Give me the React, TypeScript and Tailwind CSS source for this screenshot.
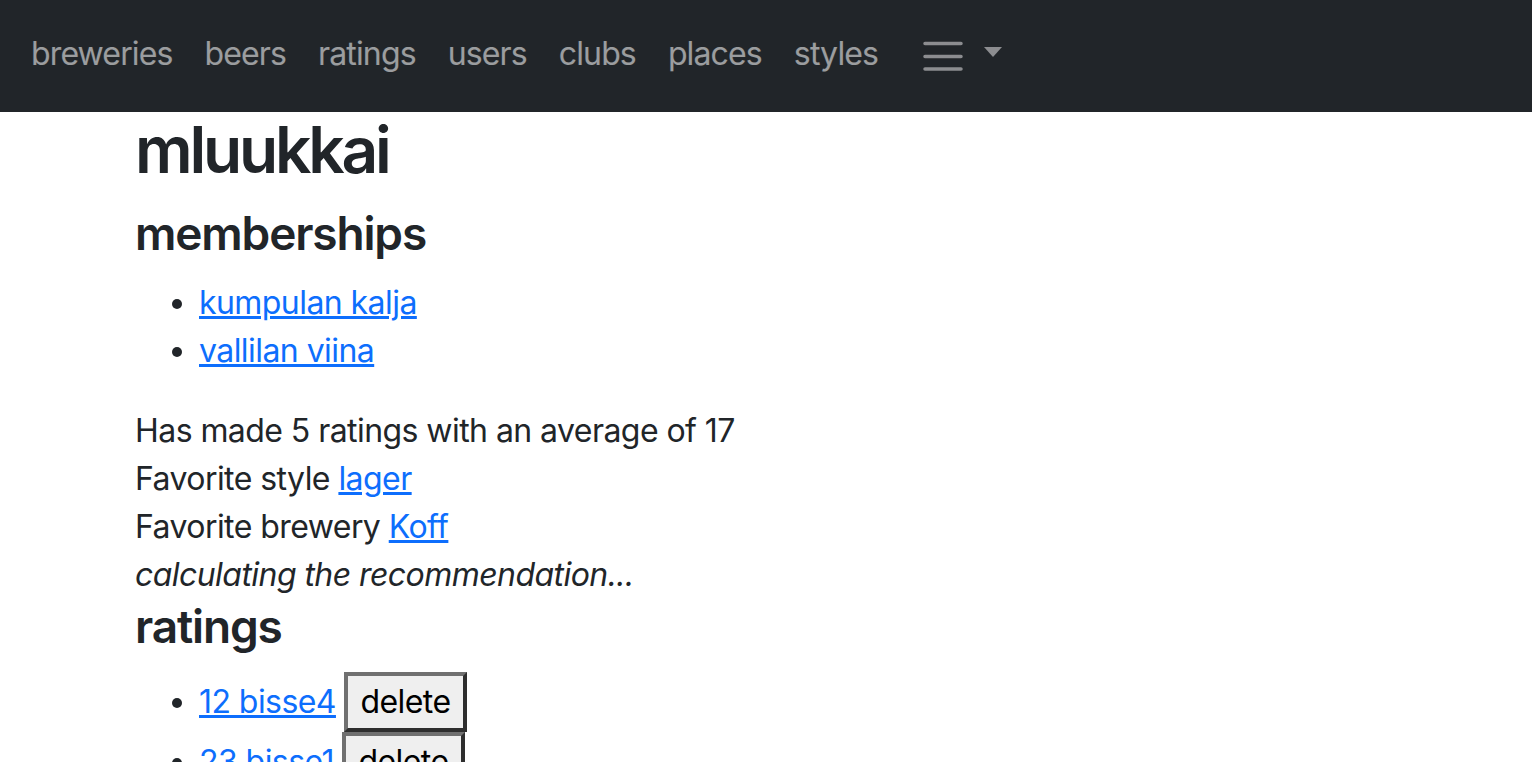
const NAV_LINKS = ["breweries", "beers", "ratings", "users", "clubs", "places", "styles"];

const MEMBERSHIPS = ["kumpulan kalja", "vallilan viina"];

const RATINGS = ["12 bisse4", "23 bisse1"];

export default function App() {
  return (
    <div className="min-h-screen bg-white text-[#212529] font-['Inter',sans-serif]">
      {/* Navbar */}
      <nav className="h-[112px] bg-[#212529] flex items-start pt-[30px] pl-[15px]">
        {NAV_LINKS.map((link) => (
          <a key={link} href="#" className="px-4 text-[32px] leading-[48px] tracking-[-0.027em] text-white/55">
            {link}
          </a>
        ))}
        <div className="ml-[29px] mt-[11px] flex items-start">
          <svg width="40" height="30" viewBox="0 0 40 30" fill="none">
            <path d="M2 2.5H38M2 15.5H38M2 28H38" stroke="#8c8d90" strokeWidth="3.5" strokeLinecap="round" />
          </svg>
          <span className="ml-[21px] mt-[6px] w-0 h-0 border-t-[10px] border-t-[#8c8d90] border-x-[9px] border-x-transparent" />
        </div>
      </nav>

      {/* User page */}
      <main className="pl-[135px] tracking-[-0.035em]">
        <h1 className="text-[64px] leading-[76px] font-semibold tracking-[-0.05em]">mluukkai</h1>

        <h2 className="mt-[18px] text-[46px] leading-[55px] font-semibold tracking-[-0.025em]">memberships</h2>
        <ul className="mt-[18px] list-disc pl-[64px] text-[32px] leading-[48px]">
          {MEMBERSHIPS.map((club) => (
            <li key={club}>
              <a href="#" className="text-[#0d6efd] underline">{club}</a>
            </li>
          ))}
        </ul>

        <div className="mt-[32px] text-[32px] leading-[48px]">
          <p>Has made 5 ratings with an average of 17</p>
          <p>
            Favorite style <a href="#" className="text-[#0d6efd] underline">lager</a>
          </p>
          <p>
            Favorite brewery <a href="#" className="text-[#0d6efd] underline">Koff</a>
          </p>
          <p className="italic">calculating the recommendation...</p>
        </div>

        <h2 className="text-[46px] leading-[55px] font-semibold tracking-[-0.025em]">ratings</h2>
        <ul className="mt-[18px] list-disc pl-[64px] text-[32px] leading-[48px]">
          {RATINGS.map((rating) => (
            <li key={rating}>
              <a href="#" className="text-[#0d6efd] underline">{rating}</a>{" "}
              <button className="inline-block px-3 py-[2px] bg-[#efefef] text-black border-4 border-t-[#707070] border-l-[#707070] border-r-[#2e2e2e] border-b-[#2e2e2e]">
                delete
              </button>
            </li>
          ))}
        </ul>
      </main>
    </div>
  );
}
